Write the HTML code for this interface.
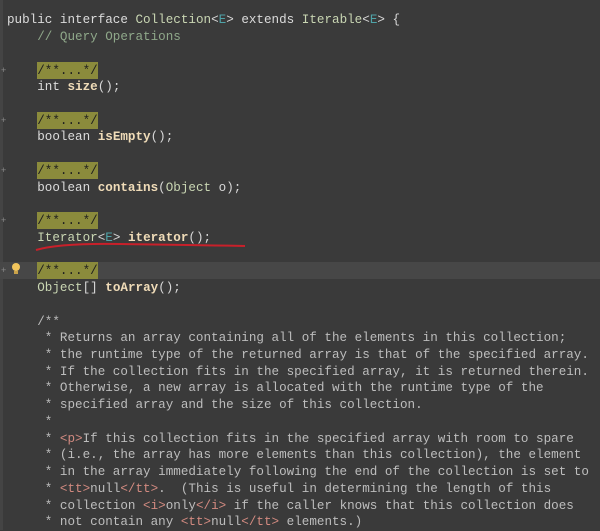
<!DOCTYPE html>
<html><head><meta charset="utf-8"><style>
html,body{margin:0;padding:0;}
body{width:600px;height:530px;background:#3a3a3a;overflow:hidden;position:relative;}
.gut{position:absolute;left:0;top:0;width:3px;height:530px;background:#444;}
pre{margin:0;position:absolute;left:7px;top:12.3px;font-family:"Liberation Mono",monospace;font-size:12.6px;line-height:16.73px;color:#d8d8d8;white-space:pre;}
.hl{position:absolute;left:0;top:262px;width:600px;height:17px;background:#474747;}
.k{color:#dcdcdc}
.t{color:#c9d6b3}
.e{color:#4fa3a8}
.c{color:#8fa88a}
.f{background:#8b8b3c;color:#1f1f1f;padding:2px 0 1px}
.m{color:#f0dcb8;font-weight:bold}
.d{color:#bdbdbd}
.g{color:#d28a80}
.pl{position:absolute;left:1px;color:#888;font:9px "Liberation Sans",sans-serif;}
</style></head><body>
<div class="gut"></div>
<div class="hl"></div>
<div class="pl" style="top:65px">+</div>
<div class="pl" style="top:115px">+</div>
<div class="pl" style="top:165px">+</div>
<div class="pl" style="top:215px">+</div>
<div class="pl" style="top:265px">+</div>
<svg style="position:absolute;left:10px;top:262px" width="12" height="14"><circle cx="6" cy="5" r="4" fill="#f2c55c"/><rect x="4" y="9" width="4" height="3" fill="#c9a24a"/></svg>
<svg style="position:absolute;left:0;top:240px" width="260" height="16"><path d="M36 10 Q60 3 120 4 Q200 5 245 6" stroke="#c8202a" stroke-width="2" fill="none"/></svg>
<pre><span class="k">public interface </span><span class="t">Collection</span>&lt;<span class="e">E</span>&gt; <span class="k">extends </span><span class="t">Iterable</span>&lt;<span class="e">E</span>&gt; {
    <span class="c">// Query Operations</span>

    <span class="f">/**...*/</span>
    <span class="k">int</span> <span class="m">size</span>();

    <span class="f">/**...*/</span>
    <span class="k">boolean</span> <span class="m">isEmpty</span>();

    <span class="f">/**...*/</span>
    <span class="k">boolean</span> <span class="m">contains</span>(<span class="t">Object</span> o);

    <span class="f">/**...*/</span>
    <span class="t">Iterator</span>&lt;<span class="e">E</span>&gt; <span class="m">iterator</span>();

    <span class="f">/**...*/</span>
    <span class="t">Object</span>[] <span class="m">toArray</span>();

<span class="d">    /**
     * Returns an array containing all of the elements in this collection;
     * the runtime type of the returned array is that of the specified array.
     * If the collection fits in the specified array, it is returned therein.
     * Otherwise, a new array is allocated with the runtime type of the
     * specified array and the size of this collection.
     *
     * <span class="g">&lt;p&gt;</span>If this collection fits in the specified array with room to spare
     * (i.e., the array has more elements than this collection), the element
     * in the array immediately following the end of the collection is set to
     * <span class="g">&lt;tt&gt;</span>null<span class="g">&lt;/tt&gt;</span>.  (This is useful in determining the length of this
     * collection <span class="g">&lt;i&gt;</span>only<span class="g">&lt;/i&gt;</span> if the caller knows that this collection does
     * not contain any <span class="g">&lt;tt&gt;</span>null<span class="g">&lt;/tt&gt;</span> elements.)</span>
</pre>
</body></html>
